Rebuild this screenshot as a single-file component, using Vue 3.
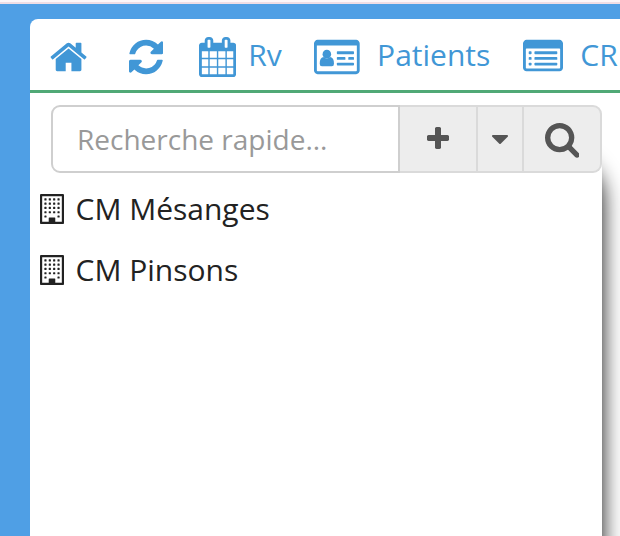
<script setup>
import { ref } from 'vue';

const search = ref('');
const sites = ref(['CM Mésanges', 'CM Pinsons']);

const windowRows = [256, 512, 768, 1024, 1280];
const windowCols = [256, 512, 768, 1024];

// The door takes the place of the two middle windows on the ground floor
const hasWindow = (row, col) => row < 1280 || col === 256 || col === 1024;
</script>

<template>
  <div class="page">
    <div class="topline"></div>
    <main class="panel">
      <nav class="nav">
        <a class="nav-item home">
          <svg width="37.14" height="40" viewBox="0 0 1664 1792"><path d="M1408 992v480q0 26-19 45t-45 19h-384v-384h-256v384h-384q-26 0-45-19t-19-45v-480q0-1 .5-3t.5-3l575-474 575 474q1 2 1 6zm223-69l-62 74q-8 9-21 11h-3q-13 0-21-7l-692-577-692 577q-12 8-24 7-13-2-21-11l-62-74q-8-10-7-23.5t11-21.5l719-599q32-26 76-26t76 26l244 204v-195q0-14 9-23t23-9h192q14 0 23 9t9 23v408l219 182q10 8 11 21.5t-7 23.5z" /></svg>
        </a>
        <a class="nav-item refresh">
          <svg width="34.29" height="40" viewBox="0 0 1536 1792"><path d="M1511 1056q0 5-1 7-64 268-268 434.5t-478 166.5q-146 0-282.5-55t-243.5-157l-129 129q-19 19-45 19t-45-19-19-45v-448q0-26 19-45t45-19h448q26 0 45 19t19 45-19 45l-137 137q71 66 161 102t187 36q134 0 250-65t186-179q11-17 53-117 8-23 30-23h192q13 0 22.5 9.5t9.5 22.5zm25-800v448q0 26-19 45t-45 19h-448q-26 0-45-19t-19-45 19-45l138-138q-148-137-349-137-134 0-250 65t-186 179q-11 17-53 117-8 23-30 23h-199q-13 0-22.5-9.5t-9.5-22.5v-7q65-268 270-434.5t480-166.5q146 0 284 55.5t245 156.5l130-129q19-19 45-19t45 19 19 45z" /></svg>
        </a>
        <a class="nav-item rv">
          <svg width="37.14" height="40" viewBox="0 0 1664 1792"><path d="M128 1664h288v-288h-288v288zm352 0h320v-288h-320v288zm-352-352h288v-320h-288v320zm352 0h320v-320h-320v320zm-352-384h288v-288h-288v288zm736 736h320v-288h-320v288zm-384-736h320v-288h-320v288zm768 736h288v-288h-288v288zm-384-352h320v-320h-320v320zm-352-864v-288q0-13-9.5-22.5t-22.5-9.5h-64q-13 0-22.5 9.5t-9.5 22.5v288q0 13 9.5 22.5t22.5 9.5h64q13 0 22.5-9.5t9.5-22.5zm736 864h288v-320h-288v320zm-384-384h320v-288h-320v288zm384 0h288v-288h-288v288zm32-480v-288q0-13-9.5-22.5t-22.5-9.5h-64q-13 0-22.5 9.5t-9.5 22.5v288q0 13 9.5 22.5t22.5 9.5h64q13 0 22.5-9.5t9.5-22.5zm384-64v1280q0 52-38 90t-90 38h-1408q-52 0-90-38t-38-90v-1280q0-52 38-90t90-38h128v-96q0-66 47-113t113-47h64q66 0 113 47t47 113v96h384v-96q0-66 47-113t113-47h64q66 0 113 47t47 113v96h128q52 0 90 38t38 90z" /></svg>
          <span>Rv</span>
        </a>
        <a class="nav-item patients">
          <svg width="45.71" height="40" viewBox="0 0 2048 1792">
            <path fill-rule="evenodd" d="M160 128h1728q66 0 113 47t47 113v1216q0 66-47 113t-113 47h-1728q-66 0-113-47t-47-113v-1216q0-66 47-113t113-47zM128 384v1120q0 32 32 32h1728q32 0 32-32v-1120z" />
            <circle cx="576" cy="768" r="192" />
            <path d="M256 1196q0-270 160-300 70 64 160 64t160-64q160 30 160 300 0 116-96 116h-448q-96 0-96-116z" />
            <rect x="1024" y="640" width="768" height="128" rx="32" />
            <rect x="1024" y="896" width="384" height="128" rx="32" />
            <rect x="1536" y="896" width="256" height="128" rx="32" />
            <rect x="1024" y="1152" width="768" height="128" rx="32" />
          </svg>
          <span>Patients</span>
        </a>
        <a class="nav-item cr">
          <svg width="40" height="40" viewBox="0 0 1792 1792">
            <path fill-rule="evenodd" d="M160 128h1472q66 0 113 47t47 113v1088q0 66-47 113t-113 47h-1472q-66 0-113-47t-47-113v-1088q0-66 47-113t113-47zM160 512q-32 0-32 32v832q0 32 32 32h1472q32 0 32-32v-832q0-32-32-32z" />
            <template v-for="y in [640, 896, 1152]" :key="y">
              <rect x="256" :y="y" width="128" height="128" rx="32" />
              <rect x="512" :y="y" width="1024" height="128" rx="32" />
            </template>
          </svg>
          <span>CR</span>
        </a>
      </nav>

      <aside class="sidebar">
        <form class="search" @submit.prevent>
          <input v-model="search" type="text" placeholder="Recherche rapide...">
          <button type="button" class="add">
            <svg width="22" height="28" viewBox="0 0 1408 1792"><path d="M1408 736v192q0 40-28 68t-68 28h-416v416q0 40-28 68t-68 28h-192q-40 0-68-28t-28-68v-416h-416q-40 0-68-28t-28-68v-192q0-40 28-68t68-28h416v-416q0-40 28-68t68-28h192q40 0 68 28t28 68v416h416q40 0 68 28t28 68z" /></svg>
          </button>
          <button type="button" class="toggle">
            <svg width="16" height="9" viewBox="0 0 1024 576"><path d="M1024 64q0 26-19 45l-448 448q-19 19-45 19t-45-19l-448-448q-19-19-19-45t19-45 45-19h896q26 0 45 19t19 45z" /></svg>
          </button>
          <button type="submit" class="go">
            <svg width="34.7" height="34.7" viewBox="0 128 1664 1664"><path d="M1152 832q0-185-131.5-316.5t-316.5-131.5-316.5 131.5-131.5 316.5 131.5 316.5 316.5 131.5 316.5-131.5 131.5-316.5zm512 832q0 52-38 90t-90 38q-54 0-90-38l-343-342q-179 124-399 124-143 0-273.5-55.5t-225-150-150-225-55.5-273.5 55.5-273.5 150-225 225-150 273.5-55.5 273.5 55.5 225 150 150 225 55.5 273.5q0 220-124 399l343 343q37 37 37 90z" /></svg>
          </button>
        </form>

        <ul class="sites">
          <li v-for="site in sites" :key="site">
            <svg width="24" height="30" viewBox="0 0 1408 1792" preserveAspectRatio="none">
              <path fill-rule="evenodd" d="M64 0h1280q26 0 45 19t19 45v1664q0 26-19 45t-45 19h-1280q-26 0-45-19t-19-45v-1664q0-26 19-45t45-19zM128 128v1536h1152v-1536z" />
              <template v-for="row in windowRows" :key="row">
                <template v-for="col in windowCols" :key="col">
                  <rect v-if="hasWindow(row, col)" :x="col" :y="row" width="128" height="128" rx="32" />
                </template>
              </template>
              <path d="M544 1408h320q32 0 32 32v288h-384v-288q0-32 32-32z" />
            </svg>
            <span>{{ site }}</span>
          </li>
        </ul>
      </aside>
    </main>
  </div>
</template>

<style>
body {
  overflow: hidden;
}
</style>

<style scoped>
.page {
  display: flex;
  flex-direction: column;
  width: 620px;
  height: 536px;
  overflow: hidden;
  background: #4f9fe5;
  font-family: "Open Sans", "Noto Sans", sans-serif;
  font-size: 30px;
}

svg {
  display: block;
  flex: none;
  fill: currentColor;
}

.topline {
  flex: none;
  height: 2px;
  background: #fbf6f9;
  border-bottom: 2px solid #eedde5;
}

.panel {
  display: flex;
  flex: 1;
  flex-direction: column;
  margin: 15px 0 0 30px;
  overflow: hidden;
  border-radius: 8px 0 0 0;
  background: #fff;
}

.nav {
  display: flex;
  flex: none;
  align-items: flex-start;
  box-sizing: border-box;
  height: 74px;
  padding: 17.7px 0 0 20px;
  border-bottom: 3px solid #50a976;
  color: #4197d6;
  white-space: nowrap;
}

.nav-item {
  display: flex;
  flex: none;
  height: 40px;
  line-height: 36px;
}

.refresh {
  margin-left: 41.4px;
}

.rv {
  width: 115px;
  margin-left: 36.4px;
  gap: 12px;
}

.patients {
  width: 208.7px;
  gap: 17.2px;
}

.cr {
  gap: 17.4px;
}

.sidebar {
  box-sizing: border-box;
  flex: 1;
  width: 572px;
  padding-top: 12px;
  border-top-right-radius: 40px;
  background: #fff;
  box-shadow: 0 66px 22px rgba(0, 0, 0, 0.95);
  clip-path: inset(0 -40px 0 0);
}

.search {
  display: flex;
  height: 68px;
  margin-left: 21px;
}

.search input {
  box-sizing: border-box;
  width: 349px;
  padding: 0 24px;
  border: 2px solid #cfcfcf;
  border-radius: 9px 0 0 9px;
  outline: none;
  background: #fff;
  color: #222;
  font: inherit;
  font-size: 28px;
}

.search input::placeholder {
  color: #999;
  opacity: 1;
}

.search button {
  display: flex;
  align-items: center;
  justify-content: center;
  box-sizing: border-box;
  padding: 0;
  border: 2px solid #dadada;
  border-left: 0;
  background: #ededed;
  color: #555;
}

.search .add {
  width: 78px;
}

.search .toggle {
  width: 46px;
}

.search .go {
  width: 78px;
  padding-top: 3px;
  border-radius: 0 9px 9px 0;
}

.sites {
  margin: 5px 0 0;
  padding: 0 0 0 9.5px;
  list-style: none;
}

.sites li {
  display: flex;
  align-items: center;
  height: 61px;
  gap: 12px;
  color: #222;
}
</style>
